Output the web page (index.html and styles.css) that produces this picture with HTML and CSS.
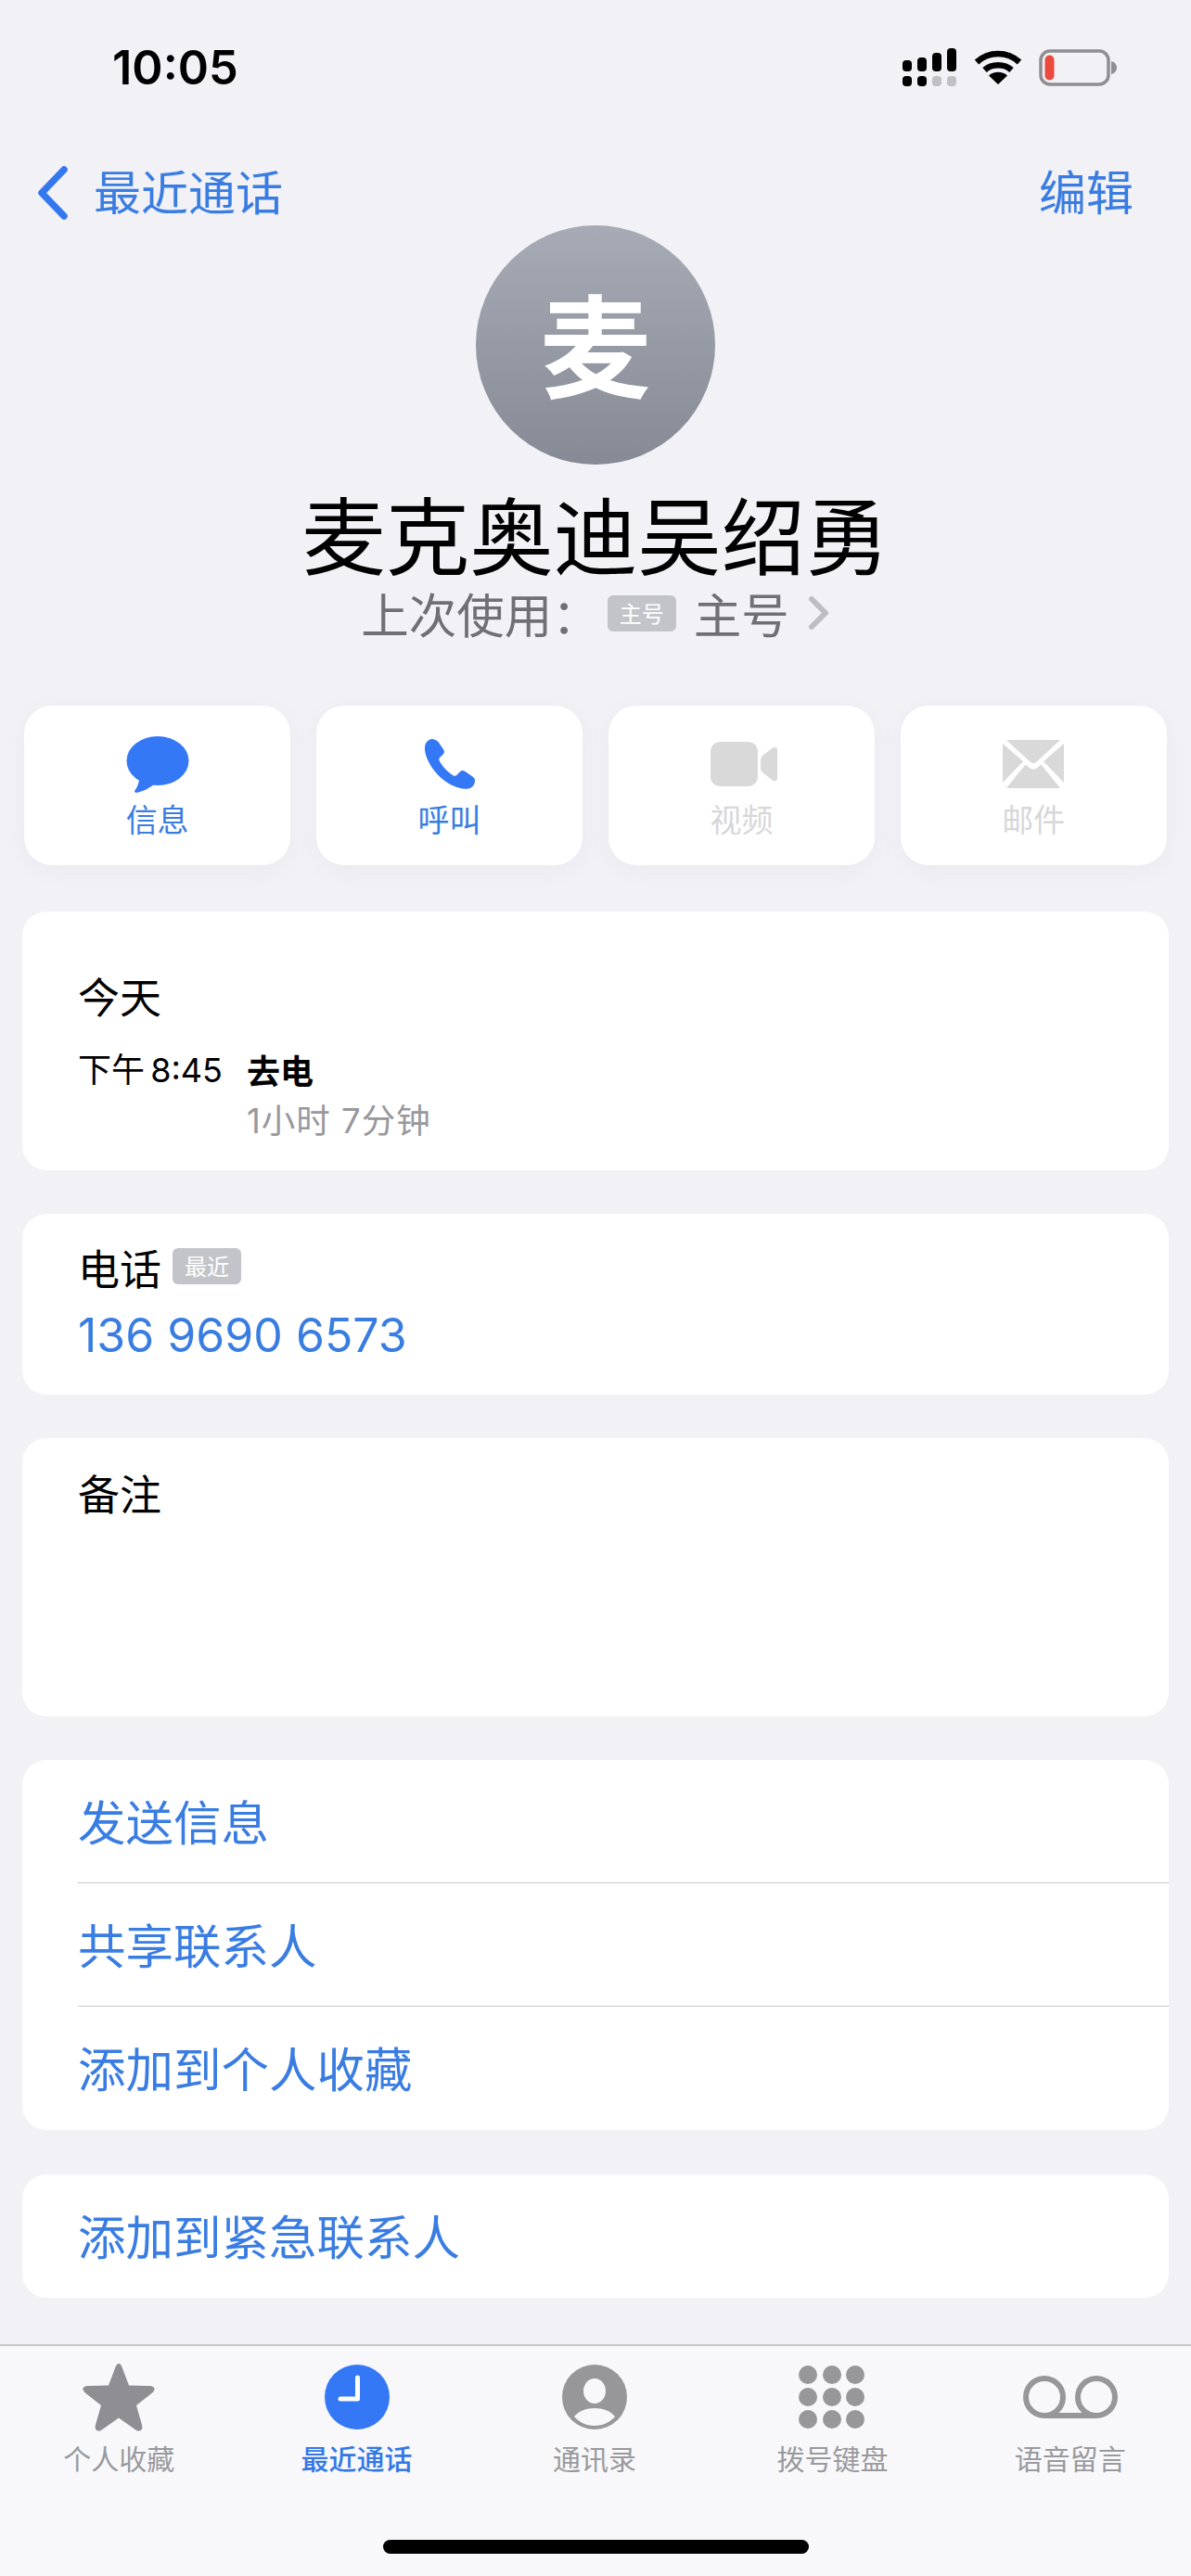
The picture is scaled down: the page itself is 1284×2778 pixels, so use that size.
FILE: index.html
```html
<!DOCTYPE html>
<html lang="zh-CN">
<head>
<meta charset="utf-8">
<title>麦克奥迪吴绍勇</title>
<link rel="stylesheet" href="styles.css">
</head>
<body>
<div class="page">
  <header class="status">
    <span class="time">10:05</span>
    <div class="status-icons">
      <svg class="ic-signal" width="60" height="42" viewBox="0 0 60 42">
        <g fill="#000">
          <rect x="1" y="13" width="10" height="12" rx="4"/><rect x="17" y="10" width="10" height="15" rx="4"/><rect x="33" y="5" width="10" height="20" rx="4"/><rect x="49" y="0" width="10" height="25" rx="4"/>
          <rect x="1" y="30" width="10" height="11" rx="4"/><rect x="17" y="30" width="10" height="11" rx="4"/>
        </g>
        <g fill="#bfbfc4"><rect x="33" y="30" width="10" height="11" rx="4"/><rect x="49" y="30" width="10" height="11" rx="4"/></g>
      </svg>
      <svg class="ic-wifi" width="52" height="38" viewBox="0 0 52 38">
        <g fill="none" stroke="#000" stroke-width="6.500">
          <path d="M3 13C16 1 36 1 49 13"/><path d="M11.500 21.500C19 14.500 33 14.500 40.500 21.500"/>
        </g>
        <path d="M26 37 L16 27.500C21 22.500 31 22.500 36 27.500Z" fill="#000"/>
      </svg>
      <svg class="ic-batt" width="84" height="40" viewBox="0 0 84 40">
        <rect x="2" y="2" width="73" height="36" rx="10" fill="none" stroke="#8e8e93" stroke-width="3.500"/>
        <rect x="6.500" y="6.500" width="10" height="27" rx="5" fill="#eb4b3d"/>
        <path d="M78 13C82 14 84 17 84 20C84 23 82 26 78 27Z" fill="#8e8e93"/>
      </svg>
    </div>
  </header>

  <nav class="nav">
    <div class="back">
      <svg width="34" height="58" viewBox="0 0 34 58"><path d="M29 4 L5 29 L29 54" fill="none" stroke="#3478f0" stroke-width="7.500" stroke-linecap="round" stroke-linejoin="round"/></svg>
      <span>最近通话</span>
    </div>
    <span class="edit">编辑</span>
  </nav>

  <section class="hero">
    <div class="avatar">麦</div>
    <h1 class="name">麦克奥迪吴绍勇</h1>
    <div class="last">
      <span>上次使用：</span>
      <span class="tag tag-main">主号</span>
      <span class="last-num">主号</span>
      <svg class="last-chev" width="24" height="38" viewBox="0 0 24 38"><path d="M4 4 L19 19 L4 34" fill="none" stroke="#bdbdc2" stroke-width="6" stroke-linecap="round" stroke-linejoin="round"/></svg>
    </div>
  </section>

  <section class="actions">
    <div class="action">
      <svg width="68" height="62" viewBox="0 0 68 62"><ellipse cx="34" cy="27.500" rx="33.500" ry="26.500" fill="#3478f6"/><path d="M14 42 C15 50 12 56 9 60 C9 62 11 62 13 61.500 C19 60 25 57 30 53Z" fill="#3478f6"/></svg>
      <span class="action-label">信息</span>
    </div>
    <div class="action">
      <svg width="56" height="56" viewBox="0 0 56 56"><path d="M11 1.500C7.500 0 3 3 1.500 7C-1 15 5 29 14.500 39C24.500 49.500 38 56 48 54.500C52 53.800 55 50 55 46C55.200 44 54 42.800 52.500 41.500L44.500 36C42.500 34.600 40.300 34.800 38.700 36.500L35.300 40C34 41 32.800 41 31.500 40.200C25.500 36.500 20 30.500 16.800 24.800C16 23.300 16.200 22 17.300 20.800L20.500 17.800C22 16.200 22.300 14.500 21.300 12.500L15.500 4C14.500 2.700 12.800 2 11 1.500Z" fill="#3478f6"/></svg>
      <span class="action-label">呼叫</span>
    </div>
    <div class="action off">
      <svg width="80" height="62" viewBox="0 0 80 62"><rect x="7" y="7" width="51" height="48" rx="10" fill="#d9d9d9"/><path d="M61 27C61 24 62 23 64 21L74 13.500C76 12 79 12.500 79 15.500V46.500C79 49.500 76 50 74 48.500L64 41C62 39 61 38 61 35Z" fill="#d9d9d9"/></svg>
      <span class="action-label">视频</span>
    </div>
    <div class="action off">
      <svg width="66" height="52" viewBox="0 0 66 52">
        <path d="M4 0H62L36 24C34.500 25.500 31.500 25.500 30 24Z" fill="#d9d9d9"/>
        <path d="M0 4V46L22 23Z" fill="#d9d9d9"/><path d="M66 4V46L44 23Z" fill="#d9d9d9"/>
        <path d="M4 52L24.500 26.500L29 30C31.500 32 34.500 32 37 30L41.500 26.500L62 52Z" fill="#d9d9d9"/>
      </svg>
      <span class="action-label">邮件</span>
    </div>
  </section>

  <section class="card card-recent">
    <div class="recent-day">今天</div>
    <div class="recent-row">
      <span class="recent-time">下午 8:45</span>
      <div class="recent-info">
        <div class="recent-type">去电</div>
        <div class="recent-dur">1小时 7分钟</div>
      </div>
    </div>
  </section>

  <section class="card card-phone">
    <div class="phone-head"><span>电话</span><span class="tag tag-recent">最近</span></div>
    <div class="phone-num">136 9690 6573</div>
  </section>

  <section class="card card-note">备注</section>

  <section class="card card-list">
    <div class="list-row">发送信息</div>
    <div class="list-row">共享联系人</div>
    <div class="list-row">添加到个人收藏</div>
  </section>

  <section class="card card-list card-list-single">
    <div class="list-row">添加到紧急联系人</div>
  </section>

  <footer class="tabbar">
    <div class="tabs">
      <div class="tab">
        <svg width="78" height="74" viewBox="0 0 78 74"><path d="M39 1C41 1 42 3 43 6L50 24.500L71 25C76 25 78 27 77.500 29C77.200 30.500 76 31.500 74.500 33L58 46L64 67C65 71 64 73 61 73.500C59.500 73.700 58 73 56 71.500L39 59.500L22 71.500C20 73 18.500 73.700 17 73.500C14 73 13 71 14 67L20 46L3.500 33C2 31.500 .8 30.500 .5 29C0 27 2 25 7 25L28 24.500L35 6C36 3 37 1 39 1Z" fill="#8e8e93"/></svg>
        <span>个人收藏</span>
      </div>
      <div class="tab tab-on">
        <svg width="70" height="70" viewBox="0 0 70 70"><circle cx="35" cy="35" r="35" fill="#3478f6"/><path d="M35.500 14V37H17" fill="none" stroke="#fff" stroke-width="5" stroke-linecap="round" stroke-linejoin="round"/></svg>
        <span>最近通话</span>
      </div>
      <div class="tab">
        <svg width="70" height="70" viewBox="0 0 70 70"><circle cx="35" cy="35" r="35" fill="#979799"/><ellipse cx="35" cy="28.500" rx="12" ry="13.500" fill="#f8f8fa"/><path d="M13 56C18 50 26 47 35 47C44 47 52 50 57 56C52 62 44 66 35 66C26 66 18 62 13 56Z" fill="#f8f8fa"/></svg>
        <span>通讯录</span>
      </div>
      <div class="tab">
        <svg width="72" height="68" viewBox="0 0 72 68" fill="#979799">
          <circle cx="10" cy="10" r="10"/><circle cx="36" cy="10" r="10"/><circle cx="61" cy="10" r="10"/>
          <circle cx="10" cy="34" r="10"/><circle cx="36" cy="34" r="10"/><circle cx="61" cy="34" r="10"/>
          <circle cx="10" cy="58" r="10"/><circle cx="36" cy="58" r="10"/><circle cx="61" cy="58" r="10"/>
        </svg>
        <span>拨号键盘</span>
      </div>
      <div class="tab">
        <svg width="102" height="46" viewBox="0 0 102 46"><g fill="none" stroke="#979799" stroke-width="6"><circle cx="23" cy="23" r="20"/><circle cx="79" cy="23" r="20"/><path d="M23 43H79"/></g></svg>
        <span>语音留言</span>
      </div>
    </div>
    <div class="home-bar"></div>
  </footer>
</div>
</body>
</html>
```
FILE: styles.css
```css
* { box-sizing: border-box; }
html, body { margin: 0; padding: 0; }
body { background: #f1f1f6; font-family: "Noto Sans CJK SC", "Inter", sans-serif; color: #000; }
.page { width: 1284px; height: 2778px; display: flex; flex-direction: column; overflow: hidden; }

.status { height: 146px; padding: 0 80px 0 121px; display: flex; align-items: center; justify-content: space-between; flex: none; }
.time { font-family: "Inter", sans-serif; font-size: 50.500px; font-weight: 600; line-height: 60px; }
.status-icons { display: flex; align-items: center; }
.ic-signal { margin-right: 18px; }
.ic-wifi { margin-right: 18px; }

.nav { height: 66px; margin-top: 29px; padding: 0 62px 0 40px; display: flex; justify-content: space-between; align-items: center; color: #3a7de2; font-size: 51px; flex: none; }
.back { display: flex; align-items: center; gap: 27px; }
.nav span { line-height: 60px; padding-bottom: 6px; }

.hero { display: flex; flex-direction: column; align-items: center; margin-top: 2px; flex: none; }
.avatar { width: 258px; height: 258px; border-radius: 50%; background: linear-gradient(#a7abb6, #858a95); color: #fff; font-size: 120px; line-height: 250px; text-align: center; font-weight: 700; }
.name { margin: 23px 0 0; font-size: 90.500px; font-weight: 400; line-height: 100px; white-space: nowrap; }
.last { margin-top: 7px; height: 60px; display: flex; align-items: center; color: #6f6f74; font-size: 51.500px; line-height: 60px; }
.tag { display: inline-block; background: #c3c4c9; color: #fff; border-radius: 6px; text-align: center; }
.tag-main { width: 74px; height: 39px; line-height: 37px; font-size: 24px; margin-left: 8px; }
.last-num { margin-left: 19px; }
.last-chev { margin-left: 20px; }

.actions { margin: 70px 26px 0; display: grid; grid-template-columns: repeat(4, 1fr); gap: 27.670px; flex: none; }
.action { height: 172px; background: #fff; border-radius: 30px; display: flex; flex-direction: column; align-items: center; color: #3a7de2; box-shadow: 0 6px 24px rgba(120,120,150,.06); }
.action svg { height: 62px; margin-top: 32px; }
.action-label { margin-top: 4px; font-size: 34px; line-height: 48px; }
.action.off { color: #d7d7da; }

.card { background: #fff; border-radius: 26px; margin: 47px 24px 0; flex: none; }
.card-recent { margin-top: 50px; height: 279px; padding: 61px 60px 0; }
.recent-day { font-size: 45px; line-height: 60px; }
.recent-row { margin-top: 23px; display: flex; }
.recent-time { width: 182px; font-size: 36px; line-height: 54px; white-space: nowrap; word-spacing: -4px; font-family: "Inter", "Noto Sans CJK SC", sans-serif; }
.recent-type { font-size: 36px; line-height: 52px; font-weight: 700; }
.recent-dur { margin-top: 3px; font-size: 36.500px; line-height: 54px; color: #98989d; font-family: "Inter", "Noto Sans CJK SC", sans-serif; letter-spacing: 1px; }

.card-phone { height: 195px; padding: 28px 60px 0; }
.phone-head { display: flex; align-items: center; font-size: 45px; line-height: 60px; height: 60px; }
.tag-recent { width: 74px; height: 39px; line-height: 37px; font-size: 24px; margin: -4px 0 0 12px; }
.phone-num { margin-top: 11px; color: #3a7de2; font-family: "Inter", sans-serif; font-size: 50px; line-height: 64px; }

.card-note { height: 300px; padding: 26px 60px 0; font-size: 45px; line-height: 66px; }

.card-list { color: #3a7de2; font-size: 51.500px; }
.list-row { height: 133px; line-height: 130px; margin-left: 60px; border-bottom: 1px solid #c9c9cd; }
.list-row:last-child { border-bottom: none; }
.card-list-single { margin-top: 48px; }

.tabbar { margin-top: auto; height: 250px; background: #f8f8fa; border-top: 2px solid #c8c8cc; display: flex; flex-direction: column; flex: none; }
.tabs { display: flex; padding-right: 2px; height: 209px; }
.tab { flex: 1; display: flex; flex-direction: column; align-items: center; color: #999a9e; font-size: 30px; }
.tab svg { height: 74px; margin-top: 18px; overflow: visible; }
.tab span { margin-top: 6px; line-height: 44px; white-space: nowrap; }
.tab-on { color: #3478e6; font-weight: 500; }
.home-bar { width: 459px; height: 15px; background: #000; border-radius: 8px; margin: 0 auto; }
```
